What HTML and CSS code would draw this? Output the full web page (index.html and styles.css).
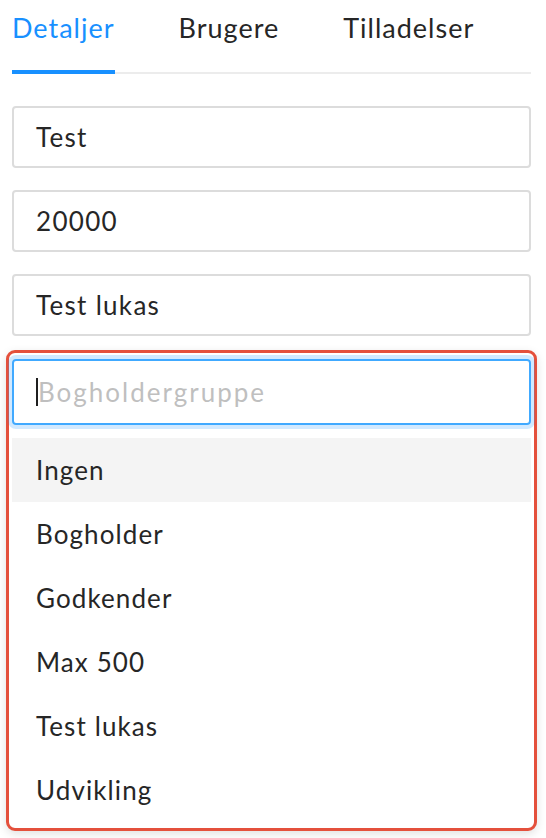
FILE: index.html
```html
<!DOCTYPE html>
<html lang="da">
<head>
<meta charset="utf-8">
<link rel="stylesheet" href="styles.css">
</head>
<body>
<div class="page">
  <nav class="tabs">
    <div class="tab active">Detaljer</div>
    <div class="tab">Brugere</div>
    <div class="tab">Tilladelser</div>
  </nav>
  <div class="fields">
    <div class="field">Test</div>
    <div class="field">20000</div>
    <div class="field">Test lukas</div>
  </div>
  <div class="highlight">
    <div class="field focused"><span class="caret"></span><span class="placeholder">Bogholdergruppe</span></div>
    <ul class="menu">
      <li class="item hover">Ingen</li>
      <li class="item">Bogholder</li>
      <li class="item">Godkender</li>
      <li class="item">Max 500</li>
      <li class="item">Test lukas</li>
      <li class="item">Udvikling</li>
    </ul>
  </div>
</div>
</body>
</html>
```

FILE: styles.css
```css
* { box-sizing: border-box; }
html, body { margin: 0; padding: 0; background: #fff; }
body {
  font-family: "Lato", "Noto Sans", sans-serif;
  color: #262626;
  width: 546px;
  height: 838px;
  overflow: hidden;
}
.page { padding: 0 15px 0 12px; }
.tabs {
  display: flex;
  gap: 64px;
  height: 74px;
  border-bottom: 2px solid #ececec;
}
.tab {
  font-size: 27px;
  letter-spacing: 1px;
  line-height: 1;
  padding-top: 14px;
  height: 74px;
  color: #262626;
}
.tab.active {
  color: #1890ff;
  border-bottom: 4px solid #1890ff;
}
.fields {
  display: flex;
  flex-direction: column;
  gap: 22px;
  margin-top: 32px;
}
.field {
  height: 62px;
  border: 2px solid #dcdcdc;
  border-radius: 4px;
  padding: 0 22px;
  display: flex;
  align-items: center;
  font-size: 26px;
  letter-spacing: 1.3px;
  color: #262626;
}
.highlight {
  margin: 14px -6px 0 -6px;
  border: 3px solid #e4503c;
  border-radius: 9px;
  padding: 6px 3px 6px 3px;
  box-shadow: 0 3px 10px rgba(0,0,0,0.12);
  background: #fff;
}
.field.focused {
  height: 66px;
  border: 2px solid #40a9ff;
  box-shadow: 0 0 0 4px rgba(24,144,255,0.2);
}
.caret {
  display: inline-block;
  width: 2px;
  height: 28px;
  background: #1f1f1f;
}
.placeholder { color: #bfbfbf; letter-spacing: 2px; }
.menu {
  list-style: none;
  margin: 13px 0 0 0;
  padding: 0;
}
.item {
  height: 64px;
  padding-left: 24px;
  display: flex;
  align-items: center;
  font-size: 26px;
  letter-spacing: 1.1px;
  color: #262626;
}
.item.hover { background: #f4f4f4; }
```
